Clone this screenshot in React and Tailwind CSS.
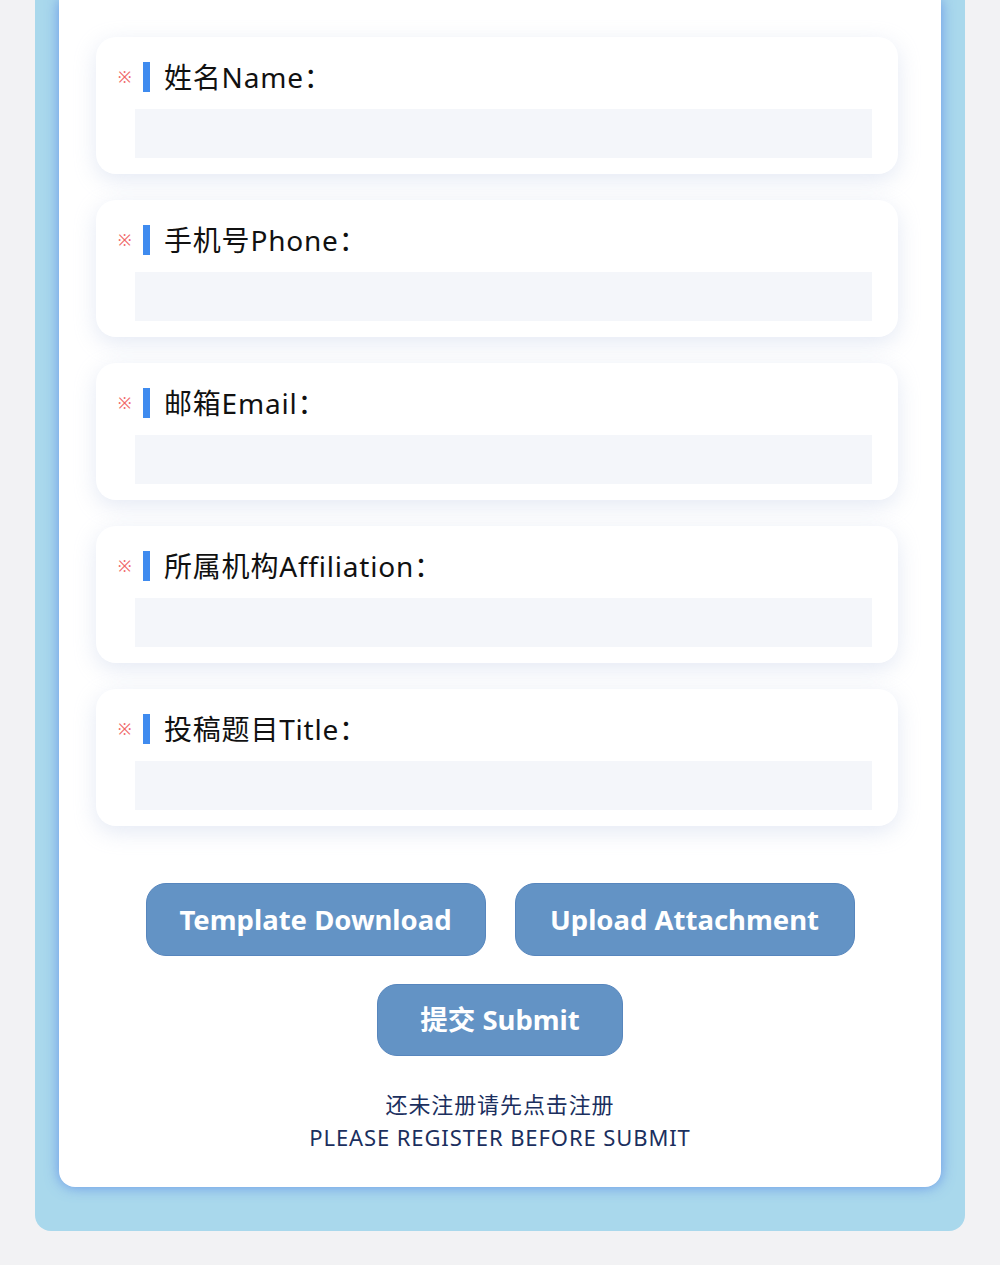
const FIELDS = [
  '姓名Name：',
  '手机号Phone：',
  '邮箱Email：',
  '所属机构Affiliation：',
  '投稿题目Title：',
];

const font = { fontFamily: '"Noto Sans", "Noto Sans CJK SC", sans-serif' };

function Field({ label }) {
  return (
    <div className="h-[137px] rounded-[20px] bg-white pl-[22px] pr-[26px] pt-[25px] shadow-[0_6px_22px_rgba(170,188,220,0.32)]">
      <div className="flex h-[30px] items-center">
        <span className="w-[12px] text-[16px] leading-none text-[#f06868]">※</span>
        <span className="ml-[13px] h-[30px] w-[7px] bg-[#3f8bef]" />
        <span className="ml-[14px] text-[28px] leading-none tracking-[0.8px] text-[#111]">{label}</span>
      </div>
      <div className="ml-[17px] mt-[17px] h-[49px] bg-[#f4f6fa]" />
    </div>
  );
}

function Btn({ children, w }) {
  return (
    <button
      className={`${w} rounded-[20px] border border-[#5786bd] bg-[#6393c5] text-[27.5px] font-bold text-white`}
    >
      {children}
    </button>
  );
}

export default function App() {
  return (
    <div className="h-[1265px] overflow-hidden bg-[#f2f2f4] px-[35px]" style={font}>
      <div className="rounded-b-[16px] bg-[#a9d8ec] px-[24px] pb-[44px]">
        <div className="rounded-b-[16px] bg-white pb-[33px] pl-[37px] pr-[43px] pt-[37px] shadow-[0_0_14px_rgba(80,125,230,0.75)]">
          <div className="flex flex-col gap-[26px]">
            {FIELDS.map((f) => (
              <Field key={f} label={f} />
            ))}
          </div>
          <div className="ml-[6px] mt-[57px] flex justify-center gap-[29px]">
            <Btn w="w-[340px] h-[73px]">Template Download</Btn>
            <Btn w="w-[340px] h-[73px]">Upload Attachment</Btn>
          </div>
          <div className="ml-[6px] mt-[28px] flex justify-center">
            <Btn w="w-[246px] h-[72px]">提交 Submit</Btn>
          </div>
          <div className="ml-[6px] mt-[32px] text-center text-[22px] leading-[33px] tracking-[0.9px] text-[#1b2f5e]">
            <div>还未注册请先点击注册</div>
            <div>PLEASE REGISTER BEFORE SUBMIT</div>
          </div>
        </div>
      </div>
    </div>
  );
}
